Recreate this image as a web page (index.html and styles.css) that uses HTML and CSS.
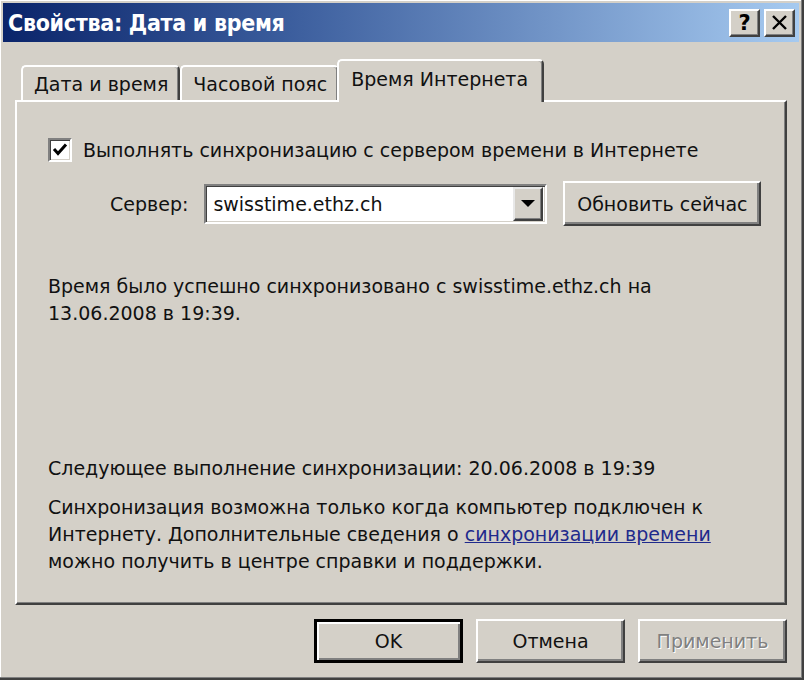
FILE: index.html
```html
<!DOCTYPE html>
<html lang="ru">
<head>
<meta charset="utf-8">
<title>Свойства: Дата и время</title>
<link rel="stylesheet" href="styles.css">
</head>
<body>
<div class="window">
  <div class="titlebar">
    <span class="title">Свойства: Дата и время</span>
    <div class="tbtns">
      <span class="tbtn help">?</span>
      <span class="tbtn close"><svg width="17" height="15" viewBox="0 0 17 15"><path d="M2 1 L15 14 M15 1 L2 14" stroke="#000" stroke-width="2.4" fill="none"/></svg></span>
    </div>
  </div>
  <div class="tabs">
    <div class="tab">Дата и время</div>
    <div class="tab">Часовой пояс</div>
    <div class="tab active">Время Интернета</div>
  </div>
  <div class="panel">
    <div class="chkrow">
      <span class="chk"><svg width="18" height="18" viewBox="0 0 18 18"><path d="M3 8 L7 12.5 L15 3.5" stroke="#000" stroke-width="3" fill="none"/></svg></span>
      <span>Выполнять синхронизацию с сервером времени в Интернете</span>
    </div>
    <div class="srvrow">
      <span class="lbl">Сервер:</span>
      <div class="combo">
        <span class="val">swisstime.ethz.ch</span>
        <span class="drop"><svg width="14" height="8" viewBox="0 0 14 8"><path d="M0 0 H14 L7 7 Z" fill="#000"/></svg></span>
      </div>
      <span class="btn upd">Обновить сейчас</span>
    </div>
    <p class="msg1">Время было успешно синхронизовано с swisstime.ethz.ch на<br>13.06.2008 в 19:39.</p>
    <p class="next">Следующее выполнение синхронизации: 20.06.2008 в 19:39</p>
    <p class="info">Синхронизация возможна только когда компьютер подключен к<br>Интернету. Дополнительные сведения о <a class="link">синхронизации времени</a><br>можно получить в центре справки и поддержки.</p>
  </div>
  <div class="footer">
    <span class="btn def">OK</span>
    <span class="btn">Отмена</span>
    <span class="btn dis">Применить</span>
  </div>
</div>
</body>
</html>
```

FILE: styles.css
```css
html, body {
  margin: 0;
  padding: 0;
}
body {
  width: 804px;
  height: 682px;
  overflow: hidden;
  background: #ffffff;
  font-family: "DejaVu Sans", "Noto Sans", sans-serif;
  font-size: 19px;
  color: #111;
}
.window {
  box-sizing: border-box;
  width: 804px;
  height: 680px;
  background: #d4d0c8;
  padding: 3px 3px 0 3px;
  border-right: 2px solid #404040;
  border-bottom: 2px solid #404040;
  box-shadow: inset -1px -1px #808080, inset 1px 1px #ffffff;
  display: flex;
  flex-direction: column;
}
.titlebar {
  height: 39px;
  flex: none;
  display: flex;
  align-items: center;
  justify-content: space-between;
  padding: 0 4px 0 5px;
  background: linear-gradient(90deg, #0a246a 0%, #3a5c9c 35%, #a6caf0 100%);
}
.title {
  font-family: "DejaVu Sans Condensed", "DejaVu Sans", sans-serif;
  font-weight: bold;
  font-size: 23px;
  color: #fff;
  letter-spacing: -0.3px;
}
.tbtns {
  display: flex;
  gap: 4px;
}
.tbtn {
  box-sizing: border-box;
  width: 31px;
  height: 28px;
  background: #d4d0c8;
  border: 2px solid;
  border-color: #ffffff #404040 #404040 #ffffff;
  box-shadow: inset -1px -1px #808080;
  display: flex;
  align-items: center;
  justify-content: center;
  font-weight: bold;
  font-size: 21px;
  color: #000;
}
.tabs {
  margin-top: 17px;
  padding-left: 18px;
  display: flex;
  align-items: flex-end;
  height: 41px;
  flex: none;
}
.tab {
  box-sizing: border-box;
  height: 35px;
  padding: 0 10px 0 11px;
  display: flex;
  align-items: center;
  border-top: 2px solid #fff;
  border-left: 2px solid #fff;
  border-right: 2px solid #404040;
  border-radius: 5px 5px 0 0;
  box-shadow: inset -1px 0 #808080;
  white-space: nowrap;
}
.tab.active {
  height: 43px;
  margin: 0 -2px -2px -2px;
  padding: 0 14px 6px 12px;
  background: #d4d0c8;
  position: relative;
  z-index: 2;
}
.panel {
  box-sizing: border-box;
  margin-left: 12px;
  width: 772px;
  height: 505px;
  flex: none;
  border-top: 2px solid #fff;
  border-left: 2px solid #fff;
  border-right: 2px solid #404040;
  border-bottom: 2px solid #404040;
  box-shadow: inset -1px -1px #808080;
  padding: 36px 0 0 31px;
}
.chkrow {
  display: flex;
  align-items: center;
  gap: 11px;
  height: 24px;
}
.chk {
  box-sizing: border-box;
  width: 24px;
  height: 24px;
  background: #fff;
  border: 2px solid;
  border-color: #808080 #ffffff #ffffff #808080;
  box-shadow: inset 1px 1px #404040, inset -1px -1px #d4d0c8;
  display: flex;
  align-items: center;
  justify-content: center;
}
.srvrow {
  margin-top: 19px;
  margin-left: 62px;
  display: flex;
  align-items: center;
  gap: 16px;
}
.combo {
  box-sizing: border-box;
  width: 343px;
  height: 40px;
  background: #fff;
  border: 2px solid;
  border-color: #808080 #ffffff #ffffff #808080;
  box-shadow: inset 1px 1px #404040, inset -1px -1px #d4d0c8;
  display: flex;
  align-items: center;
  justify-content: space-between;
  padding: 2px 2px 2px 7px;
}
.drop {
  box-sizing: border-box;
  width: 30px;
  height: 34px;
  background: #d4d0c8;
  border: 2px solid;
  border-color: #e8e8e8 #404040 #404040 #e8e8e8;
  box-shadow: inset -1px -1px #808080;
  display: flex;
  align-items: center;
  justify-content: center;
}
.btn {
  box-sizing: border-box;
  height: 44px;
  width: 149px;
  background: #d4d0c8;
  border: 2px solid;
  border-color: #ffffff #404040 #404040 #ffffff;
  box-shadow: inset -2px -2px #808080;
  display: flex;
  align-items: center;
  justify-content: center;
  white-space: nowrap;
}
.btn.upd {
  width: 198px;
  height: 45px;
}
.msg1, .next, .info {
  margin: 0;
  line-height: 27px;
}
.msg1 {
  margin-top: 47px;
}
.next {
  margin-top: 128px;
}
.info {
  margin-top: 12px;
}
.link {
  color: #1f2a8c;
  text-decoration: underline;
}
.footer {
  margin-left: 12px;
  width: 772px;
  margin-top: 14px;
  display: flex;
  justify-content: flex-end;
  gap: 13px;
}
.btn.def {
  border: 3px solid #000;
  box-shadow: inset 2px 2px #fff, inset -2px -2px #808080;
}
.btn.dis {
  color: #808080;
  text-shadow: 1px 1px #fff;
}
```
